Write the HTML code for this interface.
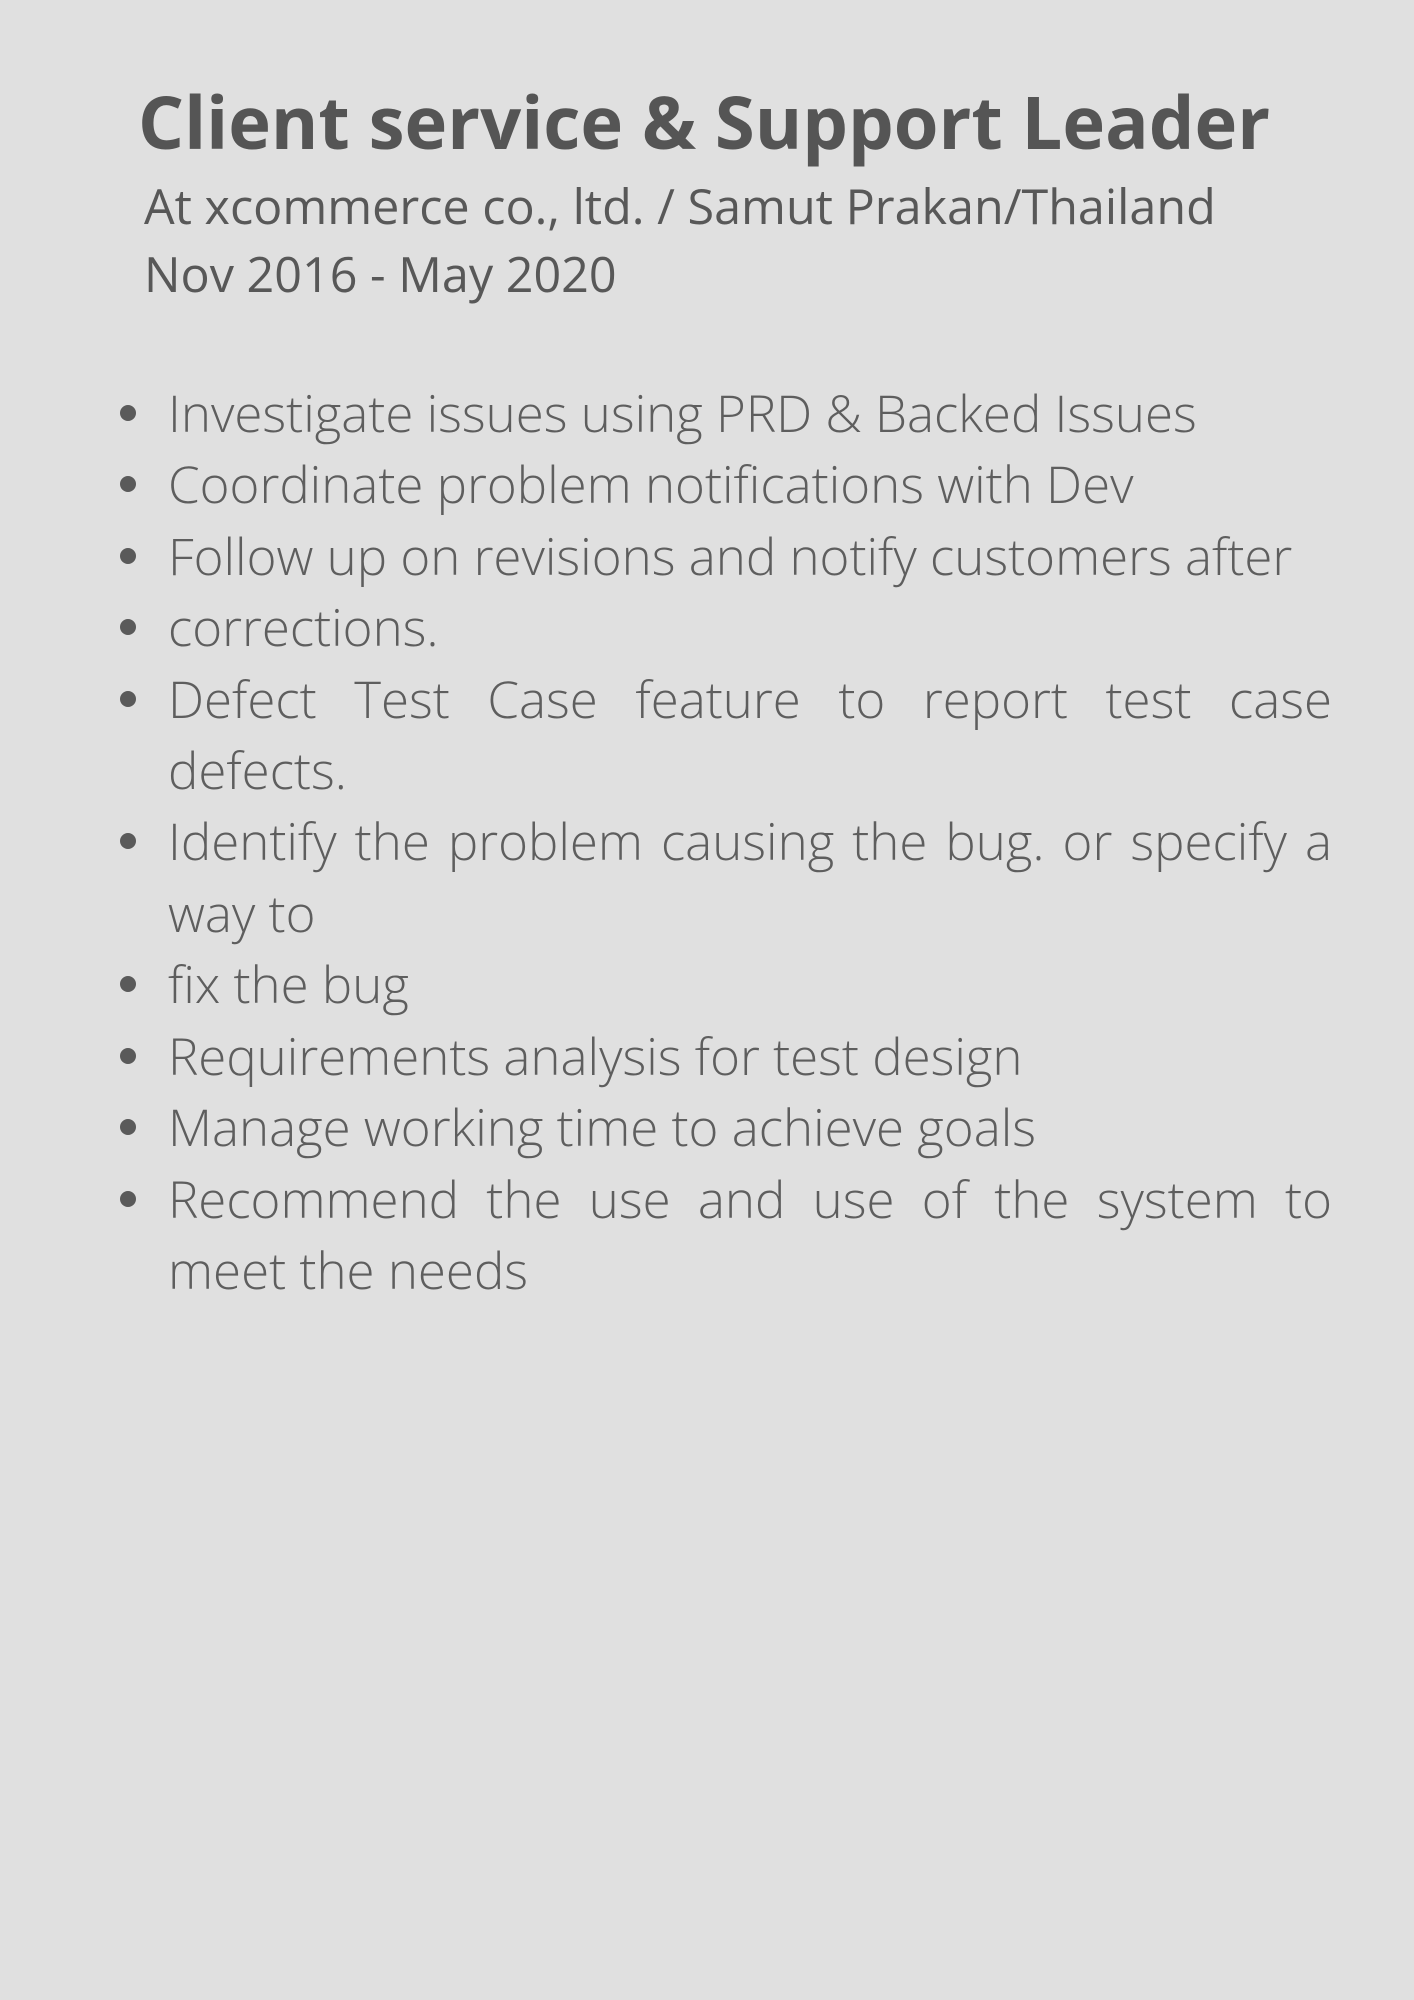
<!DOCTYPE html>
<html><head><meta charset="utf-8"><style>
html,body{margin:0;padding:0;}
body{width:1414px;height:2000px;background:#e0e0e0;color:#555;font-family:"Open Sans","Liberation Sans",sans-serif;position:relative;overflow:hidden;}
h1{position:absolute;left:138px;top:77px;margin:0;font-size:72.3px;font-weight:bold;line-height:90px;white-space:nowrap;color:#555;}
.sub{position:absolute;left:144px;top:172px;font-size:48.5px;line-height:68px;color:#585858;white-space:nowrap;}
.l{position:absolute;left:168px;width:1164px;font-size:51px;font-weight:300;line-height:71.4px;color:#5e5e5e;white-space:nowrap;}
.j{text-align:justify;text-align-last:justify;white-space:normal;height:71.4px;overflow:hidden;}
.d{position:absolute;left:120px;width:16px;height:16px;border-radius:50%;background:#5a5a5a;}
</style></head><body>
<h1>Client service &amp; Support Leader</h1>
<div class="sub">At xcommerce co., ltd. / Samut Prakan/Thailand<br>Nov 2016 - May 2020</div>
<div class="d" style="top:405px"></div>
<div class="d" style="top:476px"></div>
<div class="d" style="top:548px"></div>
<div class="d" style="top:619px"></div>
<div class="d" style="top:691px"></div>
<div class="d" style="top:833px"></div>
<div class="d" style="top:976px"></div>
<div class="d" style="top:1048px"></div>
<div class="d" style="top:1119px"></div>
<div class="d" style="top:1191px"></div>
<div class="l" style="top:377px">Investigate issues using PRD &amp; Backed Issues</div>
<div class="l" style="top:448px">Coordinate problem notifications with Dev</div>
<div class="l" style="top:520px">Follow up on revisions and notify customers after</div>
<div class="l" style="top:591px">corrections.</div>
<div class="l j" style="top:663px">Defect Test Case feature to report test case</div>
<div class="l" style="top:734px">defects.</div>
<div class="l j" style="top:805px">Identify the problem causing the bug. or specify a</div>
<div class="l" style="top:877px">way to</div>
<div class="l" style="top:948px">fix the bug</div>
<div class="l" style="top:1020px">Requirements analysis for test design</div>
<div class="l" style="top:1091px">Manage working time to achieve goals</div>
<div class="l j" style="top:1163px">Recommend the use and use of the system to</div>
<div class="l" style="top:1234px">meet the needs</div>
</body></html>
